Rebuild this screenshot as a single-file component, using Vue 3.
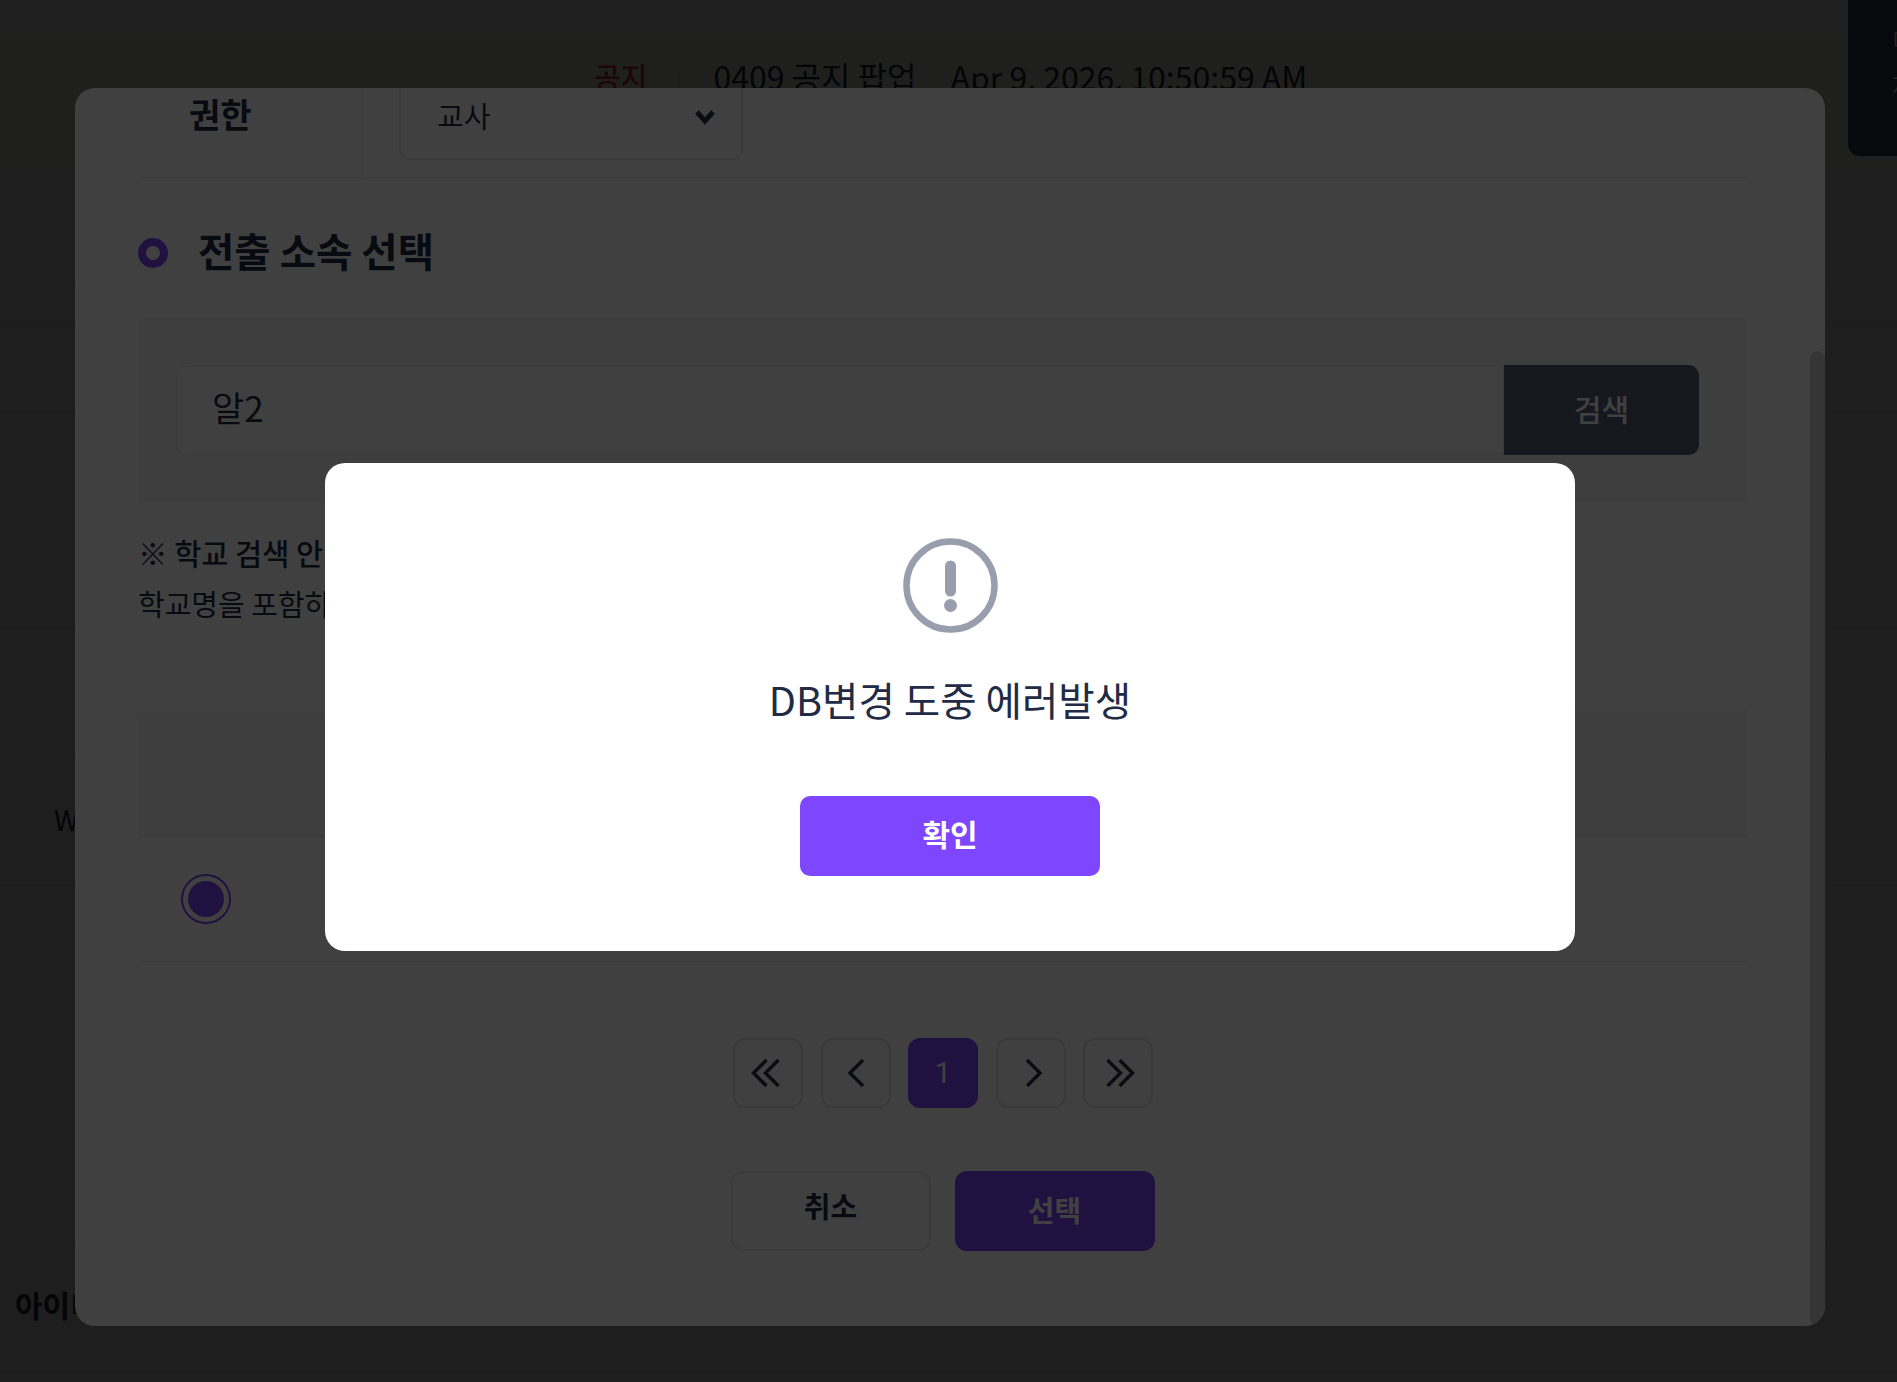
<script setup>
const pageRows = [
  { height: 46 },
  { height: 86 },
  { height: 215 },
  { height: 125 },
  { height: 133, text: "W", cls: "row-w" },
  { height: 362 },
  { height: 125, text: "아이디", cls: "row-id" },
];

const pages = [
  { key: "first", points: ["M20.5 9 7.5 22l13 13", "M32.5 9 19.5 22l13 13"] },
  { key: "prev", points: ["M29 9 16 22l13 13"] },
  { key: "page", label: "1" },
  { key: "next", points: ["M18 9l13 13-13 13"] },
  { key: "last", points: ["M11.5 9l13 13-13 13", "M23.5 9l13 13-13 13"] },
];
</script>

<template>
  <div class="page">
    <div class="topbar"></div>
    <div class="notice">
      <span class="notice-tag">공지</span>
      <span class="notice-sep"></span>
      <span class="notice-title">0409 공지 팝업</span>
      <span class="notice-date">Apr 9, 2026, 10:50:59 AM</span>
    </div>
    <div
      v-for="(row, i) in pageRows"
      :key="i"
      class="page-row"
      :class="row.cls"
      :style="{ height: row.height + 'px' }"
    >
      {{ row.text }}
    </div>

    <div class="side-panel">
      <span>미</span>
      <span>자</span>
    </div>

    <div class="overlay">
      <div class="modal">
        <div class="modal-body">
          <div class="form-row">
            <div class="form-label">권한</div>
            <div class="form-value">
              <div class="select">
                <span>교사</span>
                <svg class="select-arrow" viewBox="0 0 24 16" width="24" height="16">
                  <path d="M4 3l8 9 8-9" fill="none" stroke="#2b3045" stroke-width="5" />
                </svg>
              </div>
            </div>
          </div>

          <h2 class="section-title"><i class="section-dot"></i>전출 소속 선택</h2>

          <div class="search-panel">
            <div class="search-input">알2</div>
            <button class="search-btn">검색</button>
          </div>

          <p class="guide guide-strong">※ 학교 검색 안내</p>
          <p class="guide">학교명을 포함하여 검색</p>

          <div class="table-head"></div>
          <div class="table-row">
            <span class="radio"><i></i></span>
          </div>

          <div class="pagination">
            <button
              v-for="p in pages"
              :key="p.key"
              class="page-btn"
              :class="{ active: p.label }"
            >
              <template v-if="p.label">{{ p.label }}</template>
              <svg v-else viewBox="0 0 44 44" width="44" height="44">
                <path
                  v-for="d in p.points"
                  :key="d"
                  :d="d"
                  fill="none"
                  stroke="#2b3045"
                  stroke-width="3.5"
                />
              </svg>
            </button>
          </div>

          <div class="actions">
            <button class="btn-cancel">취소</button>
            <button class="btn-select">선택</button>
          </div>
        </div>
        <div class="scroll-thumb"></div>
      </div>
    </div>

    <div class="overlay overlay-alert">
      <div class="alert">
        <svg class="alert-icon" viewBox="0 0 95 95" width="95" height="95">
          <circle cx="47.5" cy="47.5" r="44" fill="none" stroke="#989eac" stroke-width="6.5" />
          <path d="M47.5 28v25" stroke="#989eac" stroke-width="11" stroke-linecap="round" />
          <circle cx="47.5" cy="67.5" r="6.5" fill="#989eac" />
        </svg>
        <p class="alert-msg">DB변경 도중 에러발생</p>
        <button class="alert-btn">확인</button>
      </div>
    </div>
  </div>
</template>

<style>
html,
body {
  margin: 0;
  overflow: hidden;
}
</style>

<style scoped>
.page {
  position: relative;
  width: 1897px;
  height: 1382px;
  overflow: hidden;
  background: #f2f2f2;
  color: #222b45;
  font-family: "Noto Sans CJK KR", "Noto Sans", sans-serif;
}

.topbar {
  height: 35px;
  background: #fff;
  border-bottom: 1px solid #f0f0f0;
}

.notice {
  box-sizing: border-box;
  height: 245px;
  padding: 18px 0 0 594px;
  display: flex;
  align-items: flex-start;
  font-size: 32px;
  line-height: 44px;
  background: linear-gradient(#fdf9f1, #fafafa);
  border-bottom: 1px solid #e2e2e2;
}

.notice-tag {
  color: #e0343c;
  font-size: 29px;
  font-weight: 500;
}

.notice-sep {
  width: 1px;
  height: 20px;
  margin: 15px 34px 0 31px;
  background: #bbb;
}

.notice-date {
  margin-left: 34px;
}

.page-row {
  box-sizing: border-box;
  border-bottom: 1px solid #e2e2e2;
}

.row-w {
  padding: 45px 0 0 54px;
  font-size: 28px;
  line-height: 42px;
}

.row-id {
  padding: 34px 0 0 15px;
  font-size: 30px;
  line-height: 44px;
  font-weight: 700;
}

.side-panel {
  position: absolute;
  top: 0;
  right: 0;
  width: 49px;
  height: 156px;
  display: flex;
  flex-direction: column;
  gap: 11px;
  padding: 23px 0 0 44px;
  box-sizing: border-box;
  overflow: hidden;
  white-space: nowrap;
  background: #384868;
  border-bottom-left-radius: 12px;
  color: #fff;
  font-size: 24px;
  line-height: 34px;
}

.overlay {
  position: absolute;
  inset: 0;
  background: rgba(0, 0, 0, 0.5);
}

.overlay-alert {
  background: rgba(0, 0, 0, 0.75);
}

.modal {
  position: absolute;
  left: 75px;
  top: 88px;
  width: 1750px;
  height: 1238px;
  overflow: hidden;
  background: #fff;
  border-radius: 20px;
}

.modal-body {
  margin-top: -36px;
  padding: 0 78px 0 63px;
}

.scroll-thumb {
  position: absolute;
  right: 0;
  top: 263px;
  bottom: 0;
  width: 15px;
  border-radius: 8px;
  background: #d4d4d4;
}

.form-row {
  display: flex;
  height: 127px;
  box-sizing: border-box;
  border-bottom: 2px solid #eee;
}

.form-label {
  box-sizing: border-box;
  width: 225px;
  padding: 39px 0 0 51px;
  font-size: 34px;
  line-height: 46px;
  font-weight: 700;
  border-right: 1px solid #eee;
}

.form-value {
  padding: 18px 0 0 36px;
}

.select {
  box-sizing: border-box;
  width: 344px;
  height: 90px;
  padding: 0 24px 0 36px;
  display: flex;
  align-items: center;
  justify-content: space-between;
  font-size: 29px;
  border: 2px solid #e6e6e6;
  border-radius: 10px;
}

.select-arrow {
  margin-top: 4px;
}

.section-title {
  display: flex;
  align-items: center;
  gap: 30px;
  margin: 43px 0 0;
  font-size: 39.5px;
  line-height: 56px;
  font-weight: 700;
}

.section-dot {
  box-sizing: border-box;
  width: 30px;
  height: 30px;
  margin-top: 6px;
  border: 8px solid #7f46ff;
  border-radius: 50%;
}

.search-panel {
  display: flex;
  height: 186px;
  box-sizing: border-box;
  margin-top: 39px;
  padding: 48px 48px 48px 38px;
  background: #f6f6f6;
}

.search-input {
  flex: 1;
  box-sizing: border-box;
  padding-left: 34px;
  font-size: 35px;
  line-height: 80px;
  background: #fff;
  border: 2px solid #ececec;
  border-radius: 10px 0 0 10px;
}

.search-btn {
  width: 195px;
  padding: 0 0 4px;
  border: 0;
  border-radius: 0 10px 10px 0;
  background: #566078;
  color: #fff;
  font: 500 30px "Noto Sans CJK KR", sans-serif;
}

.guide {
  margin: 0;
  font-size: 29px;
  line-height: 50px;
}

.guide-strong {
  margin-top: 24px;
  margin-bottom: 1px;
  font-size: 29.5px;
  font-weight: 500;
}

.table-head {
  box-sizing: border-box;
  height: 126px;
  margin-top: 83px;
  background: #f6f6f6;
  border-top: 2px solid #eee;
  border-bottom: 2px solid #eee;
}

.table-row {
  box-sizing: border-box;
  height: 126px;
  padding: 37px 0 0 43px;
  border-bottom: 2px solid #eee;
}

.radio {
  box-sizing: border-box;
  display: flex;
  align-items: center;
  justify-content: center;
  width: 50px;
  height: 50px;
  border: 2px solid #7f46ff;
  border-radius: 50%;
}

.radio i {
  width: 36px;
  height: 36px;
  border-radius: 50%;
  background: #7f46ff;
}

.pagination {
  display: flex;
  justify-content: center;
  gap: 17.5px;
  margin: 75px 0 0 1px;
}

.page-btn {
  box-sizing: border-box;
  display: flex;
  align-items: center;
  justify-content: center;
  width: 70px;
  height: 70px;
  padding: 0;
  background: #fff;
  border: 2px solid #e2e2e2;
  border-radius: 12px;
}

.page-btn.active {
  padding-bottom: 2px;
  background: #7f46ff;
  border-color: #7f46ff;
  color: #fff;
  font: 400 30px Roboto, sans-serif;
}

.actions {
  display: flex;
  justify-content: center;
  gap: 24px;
  margin-top: 63px;
}

.actions button {
  box-sizing: border-box;
  width: 200px;
  height: 80px;
  border-radius: 12px;
  font: 700 29px "Noto Sans CJK KR", sans-serif;
}

.btn-cancel {
  padding: 0 0 12px;
  background: #fff;
  border: 2px solid #e6e6e6;
  color: #222b45;
}

.btn-select {
  padding: 0 0 4px;
  background: #7f46ff;
  border: 0;
  color: #fff;
}

.alert {
  position: absolute;
  left: 325px;
  top: 463px;
  box-sizing: border-box;
  width: 1250px;
  height: 488px;
  padding-top: 75px;
  display: flex;
  flex-direction: column;
  align-items: center;
  background: #fff;
  border-radius: 20px;
}

.alert-icon {
  display: block;
}

.alert-msg {
  margin: 38px 0 0;
  font-size: 39.6px;
  line-height: 56px;
  color: #222b45;
}

.alert-btn {
  width: 300px;
  height: 80px;
  padding: 0 0 6px;
  margin-top: 69px;
  border: 0;
  border-radius: 10px;
  background: #7f46ff;
  color: #fff;
  font: 700 30px "Noto Sans CJK KR", sans-serif;
}
</style>
